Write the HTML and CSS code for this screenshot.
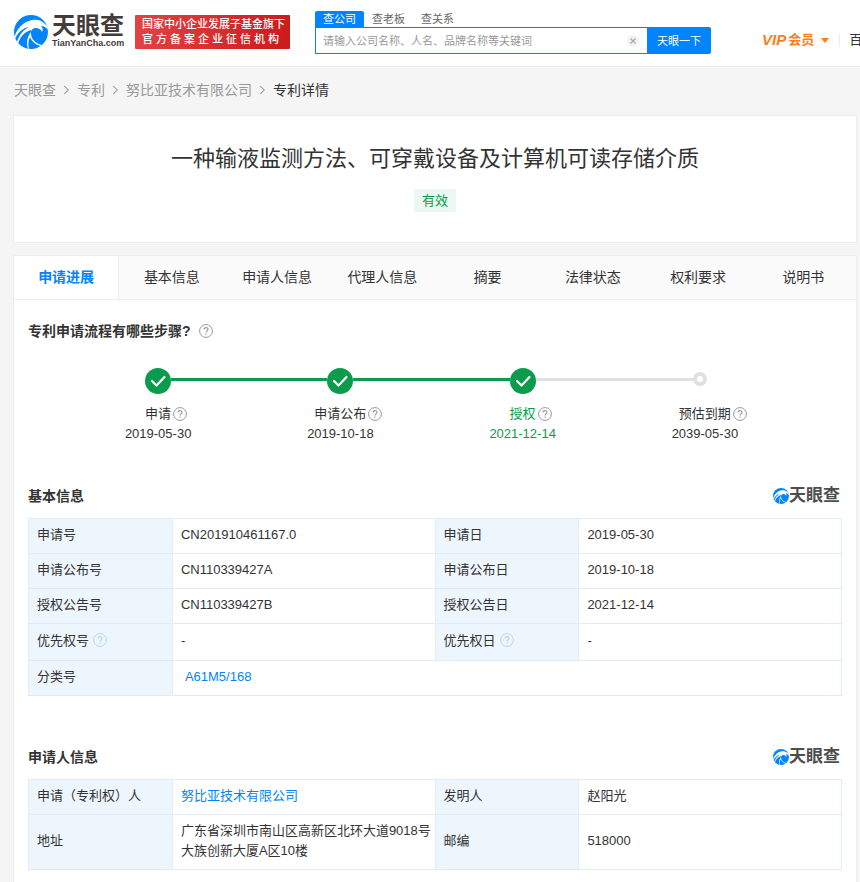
FILE: index.html
```html
<!DOCTYPE html>
<html lang="zh-CN">
<head>
<meta charset="utf-8">
<title>专利详情 - 天眼查</title>
<link rel="stylesheet" href="styles.css">
</head>
<body>
<svg class="defs" aria-hidden="true">
  <symbol id="swirl" viewBox="0 0 34 34">
    <circle cx="17" cy="17" r="17" fill="#0084ff"/>
    <path fill="#fff" d="M0 23C3 13 9 7 18 5c5-1 9 0 12 3l4 4v3c-2-3-4-4-7-4 2 2 2 4 1 6-1-3-4-4-6-4-3 0-5 2-5 5 0 6 4 10 11 12l-1 1c-5-1-9-4-11-9-2 4-2 8-1 12h-1c-2-6-1-12 3-17l0-2C10 17 6 22 4 29l-1-2c2-7 6-12 12-15C9 13 4 17 1 24z"/>
  </symbol>
  <symbol id="help" viewBox="0 0 14 14">
    <circle cx="7" cy="7" r="6.4" fill="none" stroke="currentColor"/>
    <path fill="none" stroke="currentColor" stroke-width="1.1" d="M5 5.6C5 3 9 3 9 5.4 9 6.800 7 7 7 8.500M7 9.600v1.200"/>
  </symbol>
  <symbol id="done" viewBox="0 0 26 26">
    <circle cx="13" cy="13" r="13" fill="#0a9c4c"/>
    <path fill="none" stroke="#fff" stroke-width="2.200" stroke-linecap="round" stroke-linejoin="round" d="M7 13l4.500 4.500L19.500 9"/>
  </symbol>
  <symbol id="chevron" viewBox="0 0 8 12">
    <path fill="none" stroke="#999" stroke-width="1.200" d="M1.500 1.500L6 6l-4.500 4.500"/>
  </symbol>
</svg>

<header class="topbar">
  <a class="logo" href="#">
    <svg class="logo-mark"><use href="#swirl"/></svg>
    <span class="logo-words"><span class="logo-name">天眼查</span><span class="logo-domain">TianYanCha.com</span></span>
  </a>
  <div class="slogan"><span>国家中小企业发展子基金旗下</span><span class="slogan-wide">官方备案企业征信机构</span></div>
  <form class="search">
    <nav class="search-tabs"><a class="active" href="#">查公司</a><a href="#">查老板</a><a href="#">查关系</a></nav>
    <div class="search-row">
      <div class="search-box">
        <input type="text" aria-label="搜索" placeholder="请输入公司名称、人名、品牌名称等关键词">
        <button class="clear" type="button" aria-label="清空"><svg viewBox="0 0 12 12"><circle cx="6" cy="6" r="6" fill="#f2f2f2"/><path stroke="#aaa" stroke-width="1.200" d="M3.500 3.500l5 5m0-5l-5 5"/></svg></button>
      </div>
      <button class="submit" type="button">天眼一下</button>
    </div>
  </form>
  <nav class="user-nav">
    <a class="vip" href="#"><i>VIP</i>会员<svg viewBox="0 0 8 5"><path fill="#ff7d18" d="M0 0h8L4 5z"/></svg></a>
    <a class="baidu" href="#">百</a>
  </nav>
</header>

<nav class="crumbs">
  <a href="#">天眼查</a><svg><use href="#chevron"/></svg><a href="#">专利</a><svg><use href="#chevron"/></svg><a href="#">努比亚技术有限公司</a><svg><use href="#chevron"/></svg><span>专利详情</span>
</nav>

<main>
  <section class="card title-card">
    <h1>一种输液监测方法、可穿戴设备及计算机可读存储介质</h1>
    <span class="tag">有效</span>
  </section>

  <div class="card">
    <nav class="tabs">
      <a class="active" href="#">申请进展</a><a href="#">基本信息</a><a href="#">申请人信息</a><a href="#">代理人信息</a><a href="#">摘要</a><a href="#">法律状态</a><a href="#">权利要求</a><a href="#">说明书</a>
    </nav>

    <section class="progress">
      <h2>专利申请流程有哪些步骤?<svg class="help"><use href="#help"/></svg></h2>
      <ol class="steps">
        <li class="first"><div class="marker"><svg><use href="#done"/></svg></div><div class="label">申请<svg class="help"><use href="#help"/></svg></div><time>2019-05-30</time></li>
        <li><div class="marker"><svg><use href="#done"/></svg></div><div class="label">申请公布<svg class="help"><use href="#help"/></svg></div><time>2019-10-18</time></li>
        <li class="current"><div class="marker"><svg><use href="#done"/></svg></div><div class="label">授权<svg class="help"><use href="#help"/></svg></div><time>2021-12-14</time></li>
        <li class="pending"><div class="marker"><span class="dot"></span></div><div class="label">预估到期<svg class="help"><use href="#help"/></svg></div><time>2039-05-30</time></li>
      </ol>
    </section>

    <section class="block">
      <div class="block-head"><h2>基本信息</h2><span class="brand"><svg><use href="#swirl"/></svg>天眼查</span></div>
      <table>
        <colgroup><col class="key"><col><col class="key"><col></colgroup>
        <tr><th>申请号</th><td>CN201910461167.0</td><th>申请日</th><td>2019-05-30</td></tr>
        <tr><th>申请公布号</th><td>CN110339427A</td><th>申请公布日</th><td>2019-10-18</td></tr>
        <tr><th>授权公告号</th><td>CN110339427B</td><th>授权公告日</th><td>2021-12-14</td></tr>
        <tr class="with-help"><th>优先权号<svg class="help"><use href="#help"/></svg></th><td>-</td><th>优先权日<svg class="help"><use href="#help"/></svg></th><td>-</td></tr>
        <tr><th>分类号</th><td colspan="3"><a class="code" href="#">A61M5/168</a></td></tr>
      </table>
    </section>

    <section class="block">
      <div class="block-head"><h2>申请人信息</h2><span class="brand"><svg><use href="#swirl"/></svg>天眼查</span></div>
      <table>
        <colgroup><col class="key"><col><col class="key"><col></colgroup>
        <tr><th>申请（专利权）人</th><td><a href="#">努比亚技术有限公司</a></td><th>发明人</th><td>赵阳光</td></tr>
        <tr><th>地址</th><td>广东省深圳市南山区高新区北环大道9018号大族创新大厦A区10楼</td><th>邮编</th><td>518000</td></tr>
      </table>
    </section>
  </div>
</main>
</body>
</html>
```
FILE: styles.css
```css
* { box-sizing: border-box; }
body {
  margin: 0;
  background: #f5f5f5;
  color: #333;
  font: 13px/20px "Liberation Sans", "Noto Sans CJK SC", sans-serif;
  overflow-x: hidden;
}
a { color: inherit; text-decoration: none; }
h1, h2, ol { margin: 0; padding: 0; font-weight: normal; }
button, input { font: inherit; border: 0; padding: 0; margin: 0; }
.defs { position: absolute; width: 0; height: 0; }

.topbar {
  display: flex;
  height: 67px;
  padding-left: 14px;
  background: #fff;
  border-bottom: 1px solid #ebebeb;
  white-space: nowrap;
  overflow: hidden;
}
.logo { display: flex; flex: none; width: 121px; padding-top: 15px; gap: 4px; }
.logo-mark { width: 34px; height: 34px; flex: none; }
.logo-words { display: flex; flex-direction: column; color: #443c3c; }
.logo-name { font-size: 24px; line-height: 21px; font-weight: bold; }
.logo-domain { font-size: 9px; line-height: 14px; font-weight: bold; }
.slogan {
  display: flex;
  flex-direction: column;
  justify-content: center;
  flex: none;
  width: 155px;
  height: 34px;
  margin-top: 15px;
  padding: 0 7px;
  border-radius: 1px;
  background: linear-gradient(100deg, #e34343, #cb1b1b);
  color: #fff;
  font-size: 11px;
  line-height: 15px;
  font-weight: 500;
}
.slogan-wide { letter-spacing: 3px; }

.search { flex: none; width: 396px; margin: 11px 0 0 25px; }
.search-tabs { display: flex; height: 16px; font-size: 11px; line-height: 16px; color: #666; }
.search-tabs a { padding: 0 8px; }
.search-tabs .active { background: #0084ff; color: #fff; border-radius: 2px 2px 0 0; }
.search-row { display: flex; height: 27px; }
.search-box { display: flex; align-items: center; flex: 1; border: 1px solid #0084ff; border-right: 0; padding: 0 8px 0 7px; }
.search-box input { flex: 1; min-width: 0; font-size: 11px; outline: 0; background: none; }
.search-box input::placeholder { color: #999; }
.clear { width: 12px; height: 12px; background: none; }
.clear svg { display: block; }
.submit { width: 64px; background: #0084ff; color: #fff; font-size: 11px; border-radius: 0 2px 2px 0; }

.user-nav { display: flex; align-items: center; flex: none; margin: 14px 0 0 51px; height: 52px; }
.vip { display: flex; align-items: center; color: #ff7d18; font-weight: bold; font-size: 13px; padding-right: 10px; border-right: 1px solid #eee; line-height: 14px; }
.vip i { font-size: 15px; margin-right: 2px; }
.vip svg { width: 8px; height: 5px; margin-left: 7px; }
.baidu { margin-left: 9px; font-size: 13px; }

.crumbs { display: flex; align-items: center; height: 46px; padding-left: 14px; font-size: 14px; color: #999; gap: 7px; }
.crumbs svg { width: 7px; height: 12px; }
.crumbs span { color: #333; }

main { display: flex; flex-direction: column; gap: 12px; padding: 2px 3px 0 13px; }
.card { background: #fff; border: 1px solid #ededed; }
.title-card { display: flex; flex-direction: column; align-items: center; padding: 27px 0 30px; gap: 14px; }
h1 { font-size: 22px; line-height: 32px; }
.tag { padding: 1px 8px; line-height: 21px; background: #ebf7f0; color: #0a9c4c; border-radius: 2px; }

.tabs { display: grid; grid-template-columns: repeat(8, 1fr); background: #fafafa; border-bottom: 1px solid #ededed; font-size: 14px; text-align: center; line-height: 43px; }
.tabs .active { background: #fff; color: #0084ff; font-weight: bold; border-right: 1px solid #ededed; }

h2 { font-size: 14px; font-weight: bold; line-height: 22px; }
.help { width: 14px; height: 14px; flex: none; color: #999; }
.progress { padding: 20px 14px 0; }
.progress h2 { display: flex; align-items: center; gap: 8px; }
.steps { display: grid; grid-template-columns: repeat(4, 1fr); list-style: none; margin: 26px 46px 0 39px; text-align: center; }
.marker { display: flex; height: 26px; }
.marker svg { width: 26px; height: 26px; flex: none; }
.marker::before, .marker::after { content: ""; flex: 1; height: 3px; margin-top: 10px; background: #0a9c4c; }
.first .marker::before { visibility: hidden; }
.current .marker::after, .pending .marker::before { background: #e0e0e0; }
.pending .marker { padding-right: 10px; }
.pending .marker::after { visibility: hidden; }
.dot { width: 14px; height: 14px; margin-top: 4px; border: 4px solid #e0e0e0; border-radius: 50%; }
.label { display: flex; align-items: center; justify-content: center; gap: 2px; margin-top: 10px; padding-left: 16px; }
.steps time { display: block; }
.current .label, .current time { color: #0a9c4c; }

.block { padding: 0 14px; margin-top: 41px; }
.block + .block { margin-top: 50px; padding-bottom: 30px; }
.block-head { display: flex; align-items: center; justify-content: space-between; padding-right: 2px; margin-bottom: 11px; }
.brand { display: flex; align-items: center; color: #4d4d4d; font-size: 17px; font-weight: bold; line-height: 22px; }
.brand svg { width: 16px; height: 16px; }
table { width: 100%; table-layout: fixed; border-collapse: collapse; }
.key { width: 17.7%; }
th, td { border: 1px solid #e0ecf6; padding: 6px 2px 8px 8px; font-weight: normal; text-align: left; }
.with-help th, .with-help td { padding-top: 7px; padding-bottom: 9px; }
th { background: #eef6fd; }
th .help { margin-left: 4px; color: #b5d3ea; vertical-align: -2px; }
td a { color: #0084ff; }
.code { padding-left: 4px; }
```
